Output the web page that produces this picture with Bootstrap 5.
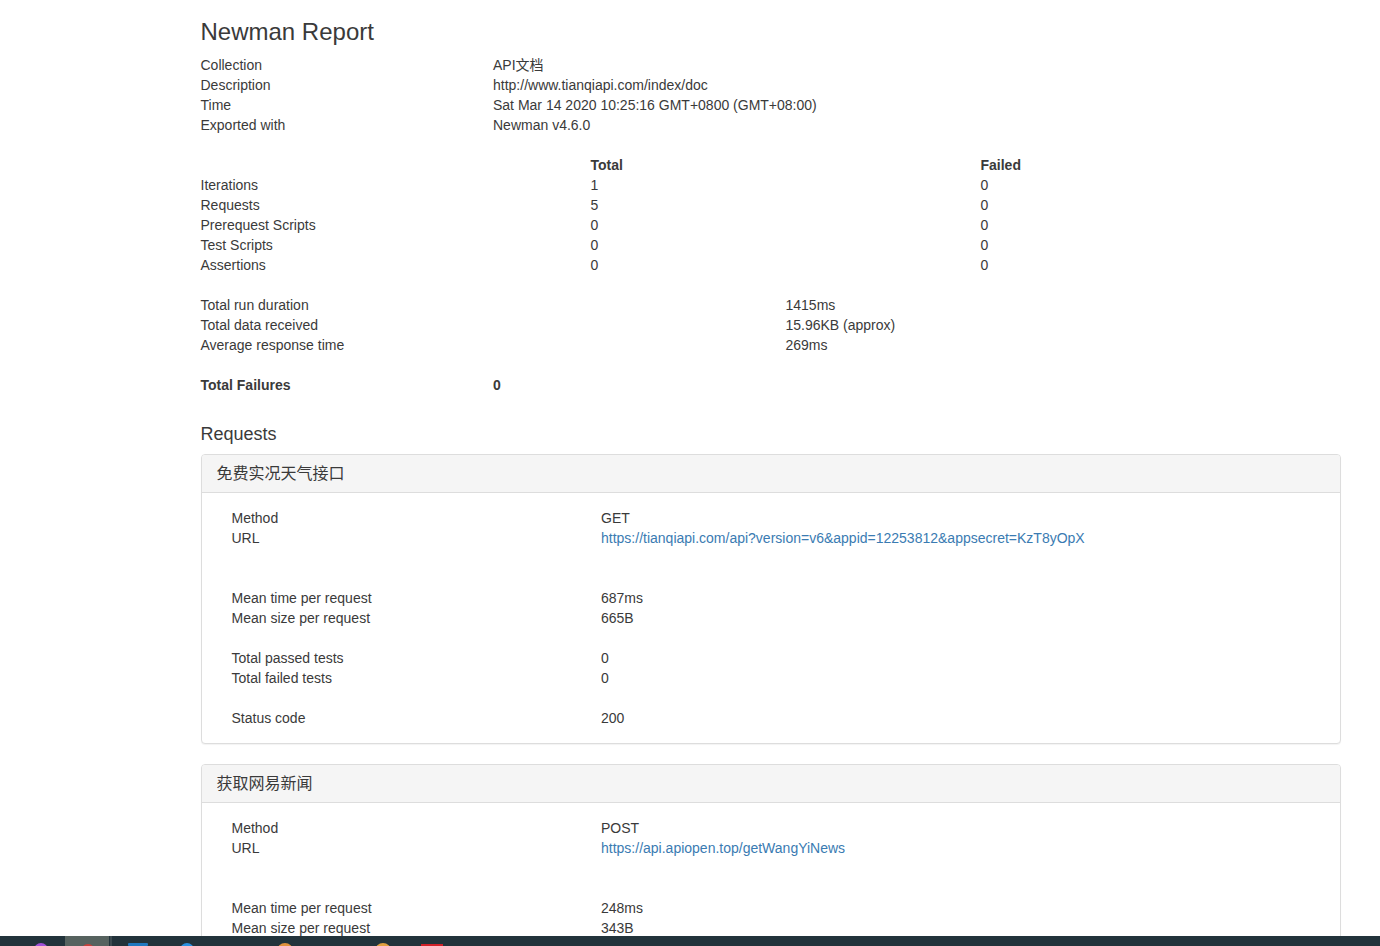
<!DOCTYPE html>
<html lang="en">
<head>
<meta charset="utf-8">
<title>Newman Report</title>
<link rel="stylesheet" href="https://cdn.jsdelivr.net/npm/bootstrap@5.3.0/dist/css/bootstrap.min.css">
<style>
html,body{height:946px;overflow:hidden}
body{font-family:"Liberation Sans","Noto Sans CJK SC",sans-serif;font-size:14px;line-height:20px;color:#3a3a3a;background:#fff;position:relative}
.sheet{width:1140px;margin-left:200.5px}
.sheet .row{--bs-gutter-x:0;margin:0;flex-wrap:nowrap}
.rpt-title{font-size:24px;line-height:26.4px;font-weight:500;margin:19px 0 10px}
.rpt-h4{font-size:18px;line-height:20px;font-weight:500;margin:29px 0 10px}
.block{margin-bottom:20px}
.block.last-block{margin-bottom:0}
.lab-wide{width:292.5px}
.c-a{width:390px}
.half{width:585px}
.rpt-panel{border:1px solid #ddd;border-radius:4px;box-shadow:0 1px 1px rgba(0,0,0,.05);margin-bottom:20px;--bs-card-bg:#fff}
.rpt-head{background:#f5f5f5;border-bottom:1px solid #ddd;padding:10px 15px;font-size:16px;line-height:17.6px;border-radius:3px 3px 0 0;height:38px}
.rpt-body{padding:15px 30px}
.k{width:369.5px}
.rpt-body a{color:#3a7bb2;text-decoration:none}
.gap20{height:20px}.gap40{height:40px}
.taskbar{position:absolute;left:0;right:0;top:936px;height:10px;background:#22333b;overflow:hidden}
.taskbar svg{display:block}
</style>
</head>
<body>
<div class="sheet">
<h1 class="rpt-title">Newman Report</h1>
<div class="block">
<div class="row"><div class="col-auto lab-wide">Collection</div><div class="col-auto">API文档</div></div>
<div class="row"><div class="col-auto lab-wide">Description</div><div class="col-auto">http://www.tianqiapi.com/index/doc</div></div>
<div class="row"><div class="col-auto lab-wide">Time</div><div class="col-auto">Sat Mar 14 2020 10:25:16 GMT+0800 (GMT+08:00)</div></div>
<div class="row"><div class="col-auto lab-wide">Exported with</div><div class="col-auto">Newman v4.6.0</div></div>
</div>
<div class="block">
<div class="row fw-bold"><div class="col-auto c-a">&nbsp;</div><div class="col-auto c-a">Total</div><div class="col-auto">Failed</div></div>
<div class="row"><div class="col-auto c-a">Iterations</div><div class="col-auto c-a">1</div><div class="col-auto">0</div></div>
<div class="row"><div class="col-auto c-a">Requests</div><div class="col-auto c-a">5</div><div class="col-auto">0</div></div>
<div class="row"><div class="col-auto c-a">Prerequest Scripts</div><div class="col-auto c-a">0</div><div class="col-auto">0</div></div>
<div class="row"><div class="col-auto c-a">Test Scripts</div><div class="col-auto c-a">0</div><div class="col-auto">0</div></div>
<div class="row"><div class="col-auto c-a">Assertions</div><div class="col-auto c-a">0</div><div class="col-auto">0</div></div>
</div>
<div class="block">
<div class="row"><div class="col-auto half">Total run duration</div><div class="col-auto">1415ms</div></div>
<div class="row"><div class="col-auto half">Total data received</div><div class="col-auto">15.96KB (approx)</div></div>
<div class="row"><div class="col-auto half">Average response time</div><div class="col-auto">269ms</div></div>
</div>
<div class="block last-block">
<div class="row fw-bold"><div class="col-auto lab-wide">Total Failures</div><div class="col-auto">0</div></div>
</div>
<h4 class="rpt-h4">Requests</h4>
<div class="card rpt-panel">
<div class="rpt-head">免费实况天气接口</div>
<div class="rpt-body">
<div class="row"><div class="col-auto k">Method</div><div class="col-auto">GET</div></div>
<div class="row"><div class="col-auto k">URL</div><div class="col-auto"><a href="#">https://tianqiapi.com/api?version=v6&amp;appid=12253812&amp;appsecret=KzT8yOpX</a></div></div>
<div class="gap40"></div>
<div class="row"><div class="col-auto k">Mean time per request</div><div class="col-auto">687ms</div></div>
<div class="row"><div class="col-auto k">Mean size per request</div><div class="col-auto">665B</div></div>
<div class="gap20"></div>
<div class="row"><div class="col-auto k">Total passed tests</div><div class="col-auto">0</div></div>
<div class="row"><div class="col-auto k">Total failed tests</div><div class="col-auto">0</div></div>
<div class="gap20"></div>
<div class="row"><div class="col-auto k">Status code</div><div class="col-auto">200</div></div>
</div>
</div>
<div class="card rpt-panel">
<div class="rpt-head">获取网易新闻</div>
<div class="rpt-body">
<div class="row"><div class="col-auto k">Method</div><div class="col-auto">POST</div></div>
<div class="row"><div class="col-auto k">URL</div><div class="col-auto"><a href="#">https://api.apiopen.top/getWangYiNews</a></div></div>
<div class="gap40"></div>
<div class="row"><div class="col-auto k">Mean time per request</div><div class="col-auto">248ms</div></div>
<div class="row"><div class="col-auto k">Mean size per request</div><div class="col-auto">343B</div></div>
</div>
</div>
</div>
<div class="taskbar">
<svg width="1380" height="10" viewBox="0 0 1380 10" aria-hidden="true">
<rect x="65" y="0" width="44" height="10" fill="#56625f"/>
<rect x="110" y="0" width="2" height="10" fill="#3c4a50"/>
<circle cx="41" cy="14" r="7" fill="#a050d8"/>
<circle cx="88" cy="15" r="7" fill="#c8403a"/>
<rect x="128" y="7" width="20" height="3" rx="1" fill="#1e78c0"/>
<circle cx="187" cy="14" r="7" fill="#2a90e0"/>
<circle cx="285" cy="15" r="8" fill="#e0913c"/>
<circle cx="383" cy="15" r="8" fill="#e0a040"/>
<rect x="421" y="8" width="22" height="2" fill="#d02028"/>
</svg>
</div>
<script src="https://cdn.jsdelivr.net/npm/bootstrap@5.3.0/dist/js/bootstrap.bundle.min.js"></script>
</body>
</html>
